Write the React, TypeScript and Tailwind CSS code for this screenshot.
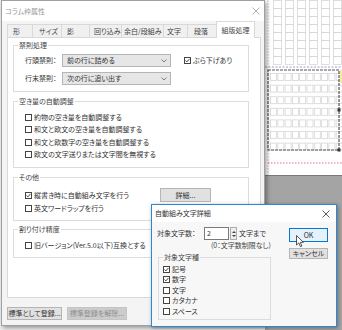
import type { ReactNode } from "react";

const FONT = "font-['Noto_Sans_CJK_JP',sans-serif] [font-feature-settings:'palt']";

const Check = ({ checked }: { checked?: boolean }) => (
  <span className="flex h-[7px] w-[7px] shrink-0 items-center justify-center border border-[#444] bg-white">
    {checked && (
      <svg width="5" height="5" viewBox="0 0 5 5">
        <path d="M0.5 2.5 L1.9 3.9 L4.5 0.9" fill="none" stroke="#333" strokeWidth="0.9" />
      </svg>
    )}
  </span>
);

const Option = ({ label, checked, h = "h-[12.5px]" }: { label: string; checked?: boolean; h?: string }) => (
  <div className={`flex items-center gap-[2px] whitespace-nowrap ${h}`}>
    <Check checked={checked} />
    <span>{label}</span>
  </div>
);

const Group = ({ title, className, children }: { title: string; className: string; children: ReactNode }) => (
  <fieldset className={`border border-[#dcdcdc] ${className}`}>
    <legend className="ml-[4px] px-[1px] leading-[9px] text-[#444]">{title}</legend>
    {children}
  </fieldset>
);

const Select = ({ value }: { value: string }) => (
  <div className="flex h-[13px] w-[109px] items-center justify-between border border-[#b5b5b5] bg-[#e6e6e6] pl-[4px] pr-[3px]">
    <span>{value}</span>
    <svg width="6" height="4" viewBox="0 0 6 4">
      <path d="M0.5 0.5 L3 3 L5.5 0.5" fill="none" stroke="#666" strokeWidth="0.8" />
    </svg>
  </div>
);

const Close = ({ color }: { color: string }) => (
  <svg width="8" height="8" viewBox="0 0 8 8">
    <path d="M0.5 0.5 L7.5 7.5 M7.5 0.5 L0.5 7.5" stroke={color} strokeWidth="0.8" />
  </svg>
);

const tabs = [
  { t: "形", w: "w-[26px] pl-[5px]" },
  { t: "サイズ", w: "w-[30px] pl-[6px]" },
  { t: "影", w: "w-[29px] pl-[5px]" },
  { t: "回り込み", w: "w-[33px] pl-[4px]" },
  { t: "余白/段組み", w: "w-[43px] pl-[2px]" },
  { t: "文字", w: "w-[25px] pl-[3px]" },
  { t: "段落", w: "w-[30px] pl-[6px]" },
];

const Canvas = () => {
  const top = [];
  for (let c = 0; c < 6; c++)
    for (let r = 0; r < 8; r++)
      top.push(<rect key={`t${c}-${r}`} x={8.5 + c * 12} y={0.5 + r * 8} width="8" height="8" fill="none" stroke="#d6d6d6" strokeWidth="0.8" />);
  const box = [];
  for (let r = 0; r < 7; r++)
    for (let c = 0; c < 10; c++)
      box.push(<rect key={`b${r}-${c}`} x={5.5 + c * 7.3} y={73.5 + r * 11.6} width="6" height="7" fill="none" stroke="#d6d6d6" strokeWidth="0.8" />);
  return (
    <svg width="77" height="330" viewBox="0 0 77 330">
      <rect width="77" height="175" fill="#fff" />
      {top}
      <line x1="3" y1="0" x2="3" y2="175" stroke="#c4c4c4" strokeDasharray="2 1" strokeWidth="0.8" />
      <line x1="0" y1="67" x2="77" y2="67" stroke="#8a80c8" strokeDasharray="2 1.5" strokeWidth="0.8" />
      {box}
      <rect x="3" y="70" width="71" height="80" fill="none" stroke="#555" strokeWidth="1.2" strokeDasharray="3 1" />
      <rect x="75" y="70" width="2" height="13" fill="#f3ec9a" />
      <rect x="72.5" y="108.5" width="3" height="3" fill="#333" />
      <rect x="72.5" y="148.5" width="3" height="3" fill="#333" />
      <line x1="3" y1="163" x2="77" y2="163" stroke="#d0506a" strokeDasharray="1.5 1.5" strokeWidth="0.8" />
      <rect y="175" width="77" height="155" fill="#a4a4a4" />
      <line x1="0" y1="175.5" x2="77" y2="175.5" stroke="#7a7a7a" />
    </svg>
  );
};

export default function App() {
  return (
    <div className={`relative h-[330px] w-[342px] overflow-hidden bg-[#ececec] text-[7px] leading-none text-[#333] ${FONT}`}>
      {/* canvas behind the dialog */}
      <div className="absolute left-[265px] top-0">
        <Canvas />
      </div>

      {/* main dialog */}
      <div className="absolute left-[1px] top-0 flex h-[326px] w-[264px] flex-col border border-[#a0a0a0] bg-[#f4f4f4] shadow-[2px_2px_4px_rgba(0,0,0,0.35)]">
        <div className="flex h-[20px] shrink-0 items-center justify-between bg-white pl-[3px] pr-[4px]">
          <span className="text-[#999]">コラム枠属性</span>
          <Close color="#999" />
        </div>

        <div className="ml-[5px] w-[254px]">
          <div className="flex h-[16px] items-end">
            {tabs.map((tab) => (
              <div key={tab.t} className={`-mr-px flex h-[13px] items-center overflow-hidden whitespace-nowrap border border-b-0 border-[#d9d9d9] bg-[#f0f0f0] text-[#444] ${tab.w}`}>
                {tab.t}
              </div>
            ))}
            <div className="relative z-10 -mb-px flex h-[17px] w-[39px] items-center justify-center whitespace-nowrap border border-b-0 border-[#d9d9d9] bg-white text-[#444]">
              組版処理
            </div>
          </div>

          <div className="flex h-[261px] flex-col border border-[#d9d9d9] bg-white">
            <Group title="禁則処理" className="ml-[5px] mt-[3px] w-[236px] pb-[6px]">
              <div className="mt-[4px] flex flex-col gap-[5px] pl-[11px]">
                <div className="flex items-center">
                  <span className="w-[37px] whitespace-nowrap">行頭禁則：</span>
                  <Select value="前の行に詰める" />
                  <div className="ml-[13px]">
                    <Option label="ぶら下げあり" checked h="h-[13px]" />
                  </div>
                </div>
                <div className="flex items-center">
                  <span className="w-[37px] whitespace-nowrap">行末禁則：</span>
                  <Select value="次の行に追い出す" />
                </div>
              </div>
            </Group>

            <Group title="空き量の自動調整" className="ml-[5px] mt-[5px] w-[236px] pb-[6px]">
              <div className="mt-[5px] flex flex-col pl-[11px]">
                <Option label="約物の空き量を自動調整する" />
                <Option label="和文と欧文の空き量を自動調整する" />
                <Option label="和文と欧数字の空き量を自動調整する" />
                <Option label="欧文の文字送りまたは文字間を無視する" />
              </div>
            </Group>

            <Group title="その他" className="ml-[5px] mt-[5px] w-[236px] pb-[6px]">
              <div className="mt-[6px] flex flex-col pl-[11px]">
                <div className="flex h-[14px] items-center">
                  <div className="w-[135px]">
                    <Option label="縦書き時に自動組み文字を行う" checked h="h-[14px]" />
                  </div>
                  <div className="flex h-[14px] w-[51px] items-center justify-center border border-[#b5b5b5] bg-[#e1e1e1]">詳細...</div>
                </div>
                <Option label="英文ワードラップを行う" h="h-[12px]" />
              </div>
            </Group>

            <Group title="割り付け精度" className="ml-[5px] mt-[4px] w-[236px] pb-[6px]">
              <div className="mt-[5px] pl-[11px]">
                <Option label="旧バージョン(Ver.5.0以下)互換とする" h="h-[12px]" />
              </div>
            </Group>
          </div>

          <div className="mt-[9px] flex gap-[5px]">
            <div className="flex h-[13px] w-[55px] items-center justify-center whitespace-nowrap border border-[#b5b5b5] bg-[#e1e1e1]">標準として登録...</div>
            <div className="flex h-[13px] w-[60px] items-center justify-center whitespace-nowrap border border-[#c4c4c4] bg-[#cccccc] text-[#8f8f8f]">標準登録を解除...</div>
          </div>
        </div>
      </div>

      {/* sub dialog */}
      <div className="absolute left-[151px] top-[204px] flex h-[123px] w-[186px] flex-col border border-[#2b88d8] bg-[#f7f7f7] shadow-[1px_1px_4px_rgba(0,0,0,0.35)]">
        <div className="flex h-[17px] shrink-0 items-center justify-between bg-white pl-[3px] pr-[6px]">
          <span>自動組み文字詳細</span>
          <Close color="#333" />
        </div>
        <div className="flex">
          <div className="w-[120px] pl-[5px]">
            <div className="mt-[5px] flex h-[13px] items-center whitespace-nowrap">
              <span className="w-[47px]">対象文字数：</span>
              <div className="flex h-[13px] w-[25px] items-center border border-[#7a7a7a] bg-white pl-[2px]">2</div>
              <div className="ml-px flex h-[13px] w-[7px] flex-col items-center justify-center gap-[2px] border border-[#adadad] bg-[#eee]">
                <svg width="4" height="2" viewBox="0 0 4 2"><path d="M0 2 L2 0 L4 2 Z" fill="#444" /></svg>
                <svg width="4" height="2" viewBox="0 0 4 2"><path d="M0 0 L2 2 L4 0 Z" fill="#444" /></svg>
              </div>
              <span className="ml-[2px]">文字まで</span>
            </div>
            <div className="flex h-[10px] items-center whitespace-nowrap pl-[54px] text-[#444]">(0：文字数制限なし)</div>
            <Group title="対象文字種" className="ml-[1px] mt-[3px] w-[113px] pb-[2px]">
              <div className="mt-[2px] flex flex-col pl-[4px]">
                <Option label="記号" checked h="h-[10.5px]" />
                <Option label="数字" checked h="h-[10.5px]" />
                <Option label="文字" h="h-[10.5px]" />
                <Option label="カタカナ" h="h-[10.5px]" />
                <Option label="スペース" h="h-[10.5px]" />
              </div>
            </Group>
          </div>
          <div className="ml-[17px] flex flex-col">
            <div className="mt-[6px] flex h-[14px] w-[39px] items-center justify-center border border-[#0078d7] bg-[#e5f1fb]">OK</div>
            <div className="mt-[6px] flex h-[11px] w-[39px] items-center justify-center whitespace-nowrap border border-[#b5b5b5] bg-[#e1e1e1]">キャンセル</div>
          </div>
        </div>
      </div>

      {/* mouse pointer */}
      <svg className="absolute left-[296px] top-[235px]" width="9" height="13" viewBox="0 0 9 13">
        <path d="M0.5 0.5 L0.5 10 L2.8 7.9 L4.4 11.6 L5.9 11 L4.3 7.4 L7.4 7.3 Z" fill="#fff" stroke="#111" strokeWidth="0.7" />
      </svg>
    </div>
  );
}
